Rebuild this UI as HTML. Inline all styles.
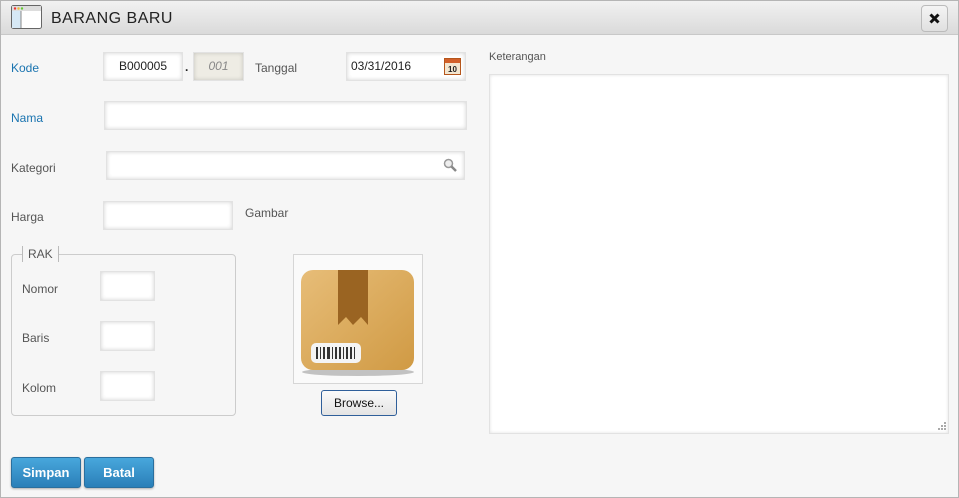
<!DOCTYPE html>
<html><head><style>
*{box-sizing:border-box;margin:0;padding:0}
body{width:959px;height:498px;background:#f6f6f6;font-family:"Liberation Sans",sans-serif;font-size:12px;color:#555;position:relative;overflow:hidden}
.a{position:absolute}
.hdr{left:0;top:0;width:959px;height:35px;background:linear-gradient(#f2f2f2,#dadada);border-bottom:1px solid #c8c8c8}
.inp{position:absolute;background:#fff;border:1px solid #e2e2e2;box-shadow:inset 0 0 4px rgba(0,0,0,.18)}
.lbl{position:absolute;font-size:12px;color:#555}
.btn{position:absolute;height:31px;border-radius:3px;background:linear-gradient(#48a7dc,#2a7fb8);border:1px solid #2a6f9e;color:#fff;font-weight:bold;font-size:13px;text-align:center;line-height:29px;box-shadow:0 1px 2px rgba(0,0,0,.3)}
</style></head><body>
<div class="a hdr"></div>
<svg class="a" style="left:11px;top:5px" width="31" height="24" viewBox="0 0 31 24"><rect x="0.5" y="0.5" width="30" height="23" rx="2" fill="#fff" stroke="#666"/><rect x="1" y="1" width="29" height="5" fill="#ddd"/><rect x="1" y="6" width="9" height="17" fill="#d6e8f5"/><line x1="10" y1="6" x2="10" y2="23" stroke="#888"/><circle cx="4" cy="3.5" r="1.2" fill="#e33"/><circle cx="7.5" cy="3.5" r="1.2" fill="#eb3"/><circle cx="11" cy="3.5" r="1.2" fill="#6c3"/></svg>
<div class="a" style="left:51px;top:10px;font-size:16px;color:#222;letter-spacing:.5px">BARANG BARU</div>
<div class="a" style="left:921px;top:5px;width:27px;height:27px;border:1px solid #bbb;border-radius:4px;background:linear-gradient(#f4f4f4,#e0e0e0)"></div>
<svg class="a" style="left:929px;top:13px" width="11" height="11"><path d="M1.5 1.5L9.5 9.5M9.5 1.5L1.5 9.5" stroke="#111" stroke-width="3"/></svg>

<div class="lbl" style="left:11px;top:61px;color:#1a74b0">Kode</div>
<div class="inp" style="left:103px;top:52px;width:80px;height:29px;text-align:center;line-height:27px;color:#222">B000005</div>
<div class="lbl" style="left:185px;top:60px;color:#222;font-weight:bold">.</div>
<div class="inp" style="left:193px;top:52px;width:51px;height:29px;background:#eeece4;text-align:center;line-height:27px;color:#888;font-style:italic">001</div>
<div class="lbl" style="left:255px;top:61px">Tanggal</div>
<div class="inp" style="left:346px;top:52px;width:120px;height:29px;line-height:27px;padding-left:4px;color:#222">03/31/2016</div>
<svg class="a" style="left:444px;top:57px" width="17" height="18"><rect x=".5" y="1.5" width="16" height="16" fill="#f3e6d0" stroke="#b5561c"/><rect x="1" y="2" width="15" height="4" fill="#d2602a"/><text x="8.5" y="15" font-size="8" font-weight="bold" text-anchor="middle" fill="#222" font-family="Liberation Sans">10</text></svg>

<div class="lbl" style="left:11px;top:111px;color:#1a74b0">Nama</div>
<div class="inp" style="left:104px;top:101px;width:363px;height:29px"></div>
<div class="lbl" style="left:11px;top:161px">Kategori</div>
<div class="inp" style="left:106px;top:151px;width:359px;height:29px"></div>
<svg class="a" style="left:443px;top:158px" width="14" height="14"><circle cx="5.5" cy="5.5" r="4" fill="#eee" stroke="#999" stroke-width="1.5"/><line x1="8.5" y1="8.5" x2="13" y2="13" stroke="#888" stroke-width="2.5"/></svg>
<div class="lbl" style="left:11px;top:210px">Harga</div>
<div class="inp" style="left:103px;top:201px;width:130px;height:29px"></div>
<div class="lbl" style="left:245px;top:206px">Gambar</div>

<div class="a" style="left:11px;top:254px;width:225px;height:162px;border:1px solid #ccc;border-radius:4px"></div>
<div class="a" style="left:22px;top:246px;padding:0 5px;background:#f6f6f6;border-left:1px solid #bbb;border-right:1px solid #bbb;height:16px;line-height:16px;color:#555">RAK</div>
<div class="lbl" style="left:22px;top:282px">Nomor</div>
<div class="inp" style="left:100px;top:271px;width:55px;height:30px"></div>
<div class="lbl" style="left:22px;top:331px">Baris</div>
<div class="inp" style="left:100px;top:321px;width:55px;height:30px"></div>
<div class="lbl" style="left:22px;top:381px">Kolom</div>
<div class="inp" style="left:100px;top:371px;width:55px;height:30px"></div>

<div class="a" style="left:293px;top:254px;width:130px;height:130px;border:1px solid #d6d6d6;background:#fafafa"></div>
<svg class="a" style="left:298px;top:268px" width="120" height="112" viewBox="0 0 120 112"><defs><linearGradient id="g" x1="0" y1="0" x2="1" y2="1"><stop offset="0" stop-color="#e7bd78"/><stop offset="1" stop-color="#d09a44"/></linearGradient></defs><ellipse cx="60" cy="104" rx="56" ry="4" fill="#aaa" opacity=".7"/><rect x="3" y="2" width="113" height="100" rx="12" fill="url(#g)"/><path d="M40 2h30v55l-7-8-8 8-7-8-8 8z" fill="#9a6422"/><rect x="13" y="75" width="50" height="20" rx="5" fill="#f4f4f4"/><g fill="#333"><rect x="18" y="79" width="2" height="12"/><rect x="22" y="79" width="1" height="12"/><rect x="25" y="79" width="2" height="12"/><rect x="29" y="79" width="3" height="12"/><rect x="34" y="79" width="1" height="12"/><rect x="37" y="79" width="2" height="12"/><rect x="41" y="79" width="2" height="12"/><rect x="45" y="79" width="1" height="12"/><rect x="48" y="79" width="2" height="12"/><rect x="52" y="79" width="2" height="12"/><rect x="56" y="79" width="1" height="12"/></g></svg>
<div class="a" style="left:321px;top:390px;width:76px;height:26px;border:1px solid #2f5f9a;border-radius:3px;background:linear-gradient(#fafafa,#e4e4e4);text-align:center;line-height:24px;color:#111">Browse...</div>

<div class="lbl" style="left:489px;top:51px;font-size:11px">Keterangan</div>
<div class="inp" style="left:489px;top:74px;width:460px;height:360px;box-shadow:inset 0 0 3px rgba(0,0,0,.12)"></div>
<svg class="a" style="left:937px;top:421px" width="10" height="10"><g fill="#aaa"><rect x="7" y="1" width="2" height="2"/><rect x="4" y="4" width="2" height="2"/><rect x="7" y="4" width="2" height="2"/><rect x="1" y="7" width="2" height="2"/><rect x="4" y="7" width="2" height="2"/><rect x="7" y="7" width="2" height="2"/></g></svg>

<div class="btn" style="left:11px;top:457px;width:70px">Simpan</div>
<div class="btn" style="left:84px;top:457px;width:70px">Batal</div>
<div class="a" style="left:0;top:0;width:959px;height:498px;border:1px solid #b5b5b5;pointer-events:none"></div>
</body></html>
